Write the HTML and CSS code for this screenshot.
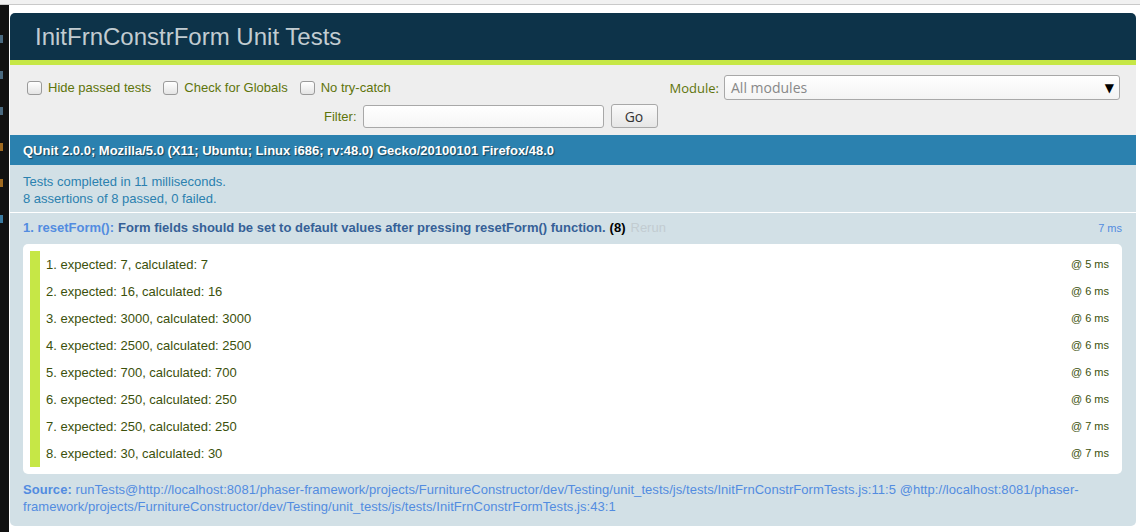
FILE: index.html
```html
<!DOCTYPE html>
<html>
<head>
<meta charset="utf-8">
<title>InitFrnConstrForm Unit Tests</title>
<link rel="stylesheet" href="styles.css">
</head>
<body>
<div class="topstrip"></div>
<div class="frame">
  <div class="sidebar">
    <span class="mark m1"></span><span class="mark m2"></span><span class="mark m3"></span><span class="mark m4"></span><span class="mark m5"></span><span class="mark m6"></span>
  </div>
  <div class="page">
    <h1 class="qheader">InitFrnConstrForm Unit Tests</h1>
    <div class="banner"></div>
    <div class="toolbar">
      <div class="row1">
        <div class="checks">
          <label class="chk"><span class="box"></span>Hide passed tests</label>
          <label class="chk"><span class="box"></span>Check for Globals</label>
          <label class="chk"><span class="box"></span>No try-catch</label>
        </div>
        <div class="module">
          <span class="module-label">Module:</span>
          <div class="select"><span>All modules</span><span class="arrow">▼</span></div>
        </div>
      </div>
      <div class="row2">
        <span class="filter-label">Filter:</span>
        <span class="input"></span>
        <span class="gobtn">Go</span>
      </div>
    </div>
    <div class="useragent">QUnit 2.0.0; Mozilla/5.0 (X11; Ubuntu; Linux i686; rv:48.0) Gecko/20100101 Firefox/48.0</div>
    <div class="testresult">Tests completed in 11 milliseconds.<br>8 assertions of 8 passed, 0 failed.</div>
    <div class="test">
      <div class="test-title">
        <strong class="module-name">1. resetForm():</strong>
        <strong class="test-name">Form fields should be set to default values after pressing resetForm() function.</strong>
        <strong class="counts">(8)</strong>
        <span class="rerun">Rerun</span>
        <span class="runtime">7 ms</span>
      </div>
      <ol class="assert-list">
        <li><span>1. expected: 7, calculated: 7</span><span class="rt">@ 5 ms</span></li>
        <li><span>2. expected: 16, calculated: 16</span><span class="rt">@ 6 ms</span></li>
        <li><span>3. expected: 3000, calculated: 3000</span><span class="rt">@ 6 ms</span></li>
        <li><span>4. expected: 2500, calculated: 2500</span><span class="rt">@ 6 ms</span></li>
        <li><span>5. expected: 700, calculated: 700</span><span class="rt">@ 6 ms</span></li>
        <li><span>6. expected: 250, calculated: 250</span><span class="rt">@ 6 ms</span></li>
        <li><span>7. expected: 250, calculated: 250</span><span class="rt">@ 7 ms</span></li>
        <li><span>8. expected: 30, calculated: 30</span><span class="rt">@ 7 ms</span></li>
      </ol>
      <p class="source"><strong class="source-label">Source:</strong> runTests@http://localhost:8081/phaser-framework/projects/FurnitureConstructor/dev/Testing/unit_tests/js/tests/InitFrnConstrFormTests.js:11:5 @http://localhost:8081/phaser-framework/projects/FurnitureConstructor/dev/Testing/unit_tests/js/tests/InitFrnConstrFormTests.js:43:1</p>
    </div>
  </div>
</div>
</body>
</html>
```

FILE: styles.css
```css
html, body {
  margin: 0;
  padding: 0;
  background: #fff;
  font-family: "Liberation Sans", Arial, sans-serif;
  font-size: 13px;
  overflow: hidden;
}
.topstrip {
  height: 4px;
  background: #f1f1f1;
  border-bottom: 1px solid #c9c9c9;
}
.frame {
  display: flex;
  height: 527px;
}
.sidebar {
  width: 9px;
  background: #111;
  display: flex;
  flex-direction: column;
  padding-top: 30px;
  gap: 28px;
}
.mark {
  display: block;
  width: 3px;
  height: 8px;
  background: #4a6a80;
}
.m4, .m5 { background: #a06a20; }
.m6 { background: #3a7aa0; }
.page {
  margin-left: 1px;
  width: 1126px;
  padding-top: 8px;
}
.qheader {
  margin: 0;
  padding: 12px 0 11px 25px;
  background: #0d3349;
  color: #c2ccd1;
  font-size: 24px;
  line-height: 24px;
  font-weight: 400;
  border-radius: 5px 5px 0 0;
}
.banner {
  height: 5px;
  background: #c6e746;
}
.toolbar {
  background: #eee;
  color: #5e740b;
  padding: 10px 16px 7px 17px;
  height: 53px;
}
.row1 {
  display: flex;
  justify-content: space-between;
  align-items: center;
}
.checks {
  display: flex;
  gap: 12px;
  align-items: center;
}
.chk {
  display: flex;
  align-items: center;
  gap: 6px;
  line-height: 15px;
}
.box {
  display: inline-block;
  width: 13px;
  height: 12px;
  border: 1px solid #9a9a9a;
  border-radius: 3px;
  background: linear-gradient(#fff, #e4e4e4);
}
.module {
  display: flex;
  align-items: center;
  gap: 5px;
}
.module-label {
  font-family: "Open Sans", sans-serif;
  font-size: 13px;
}
.select {
  width: 383px;
  height: 23px;
  border: 1px solid #a8a8a8;
  border-radius: 3px;
  background: linear-gradient(#fff, #f3f3f3);
  display: flex;
  align-items: center;
  justify-content: space-between;
  padding: 0 5px 0 6px;
  font-family: "Open Sans", sans-serif;
  font-size: 14px;
  color: #888;
}
.arrow {
  color: #000;
  font-size: 12px;
  font-family: "DejaVu Sans", sans-serif;
}
.row2 {
  display: flex;
  align-items: center;
  margin-left: 297px;
  margin-top: 4px;
  gap: 6px;
}
.input {
  display: inline-block;
  width: 239px;
  height: 21px;
  border: 1px solid #a8a8a8;
  border-radius: 3px;
  background: linear-gradient(#fff, #f5f5f5);
}
.gobtn {
  display: inline-flex;
  align-items: center;
  justify-content: center;
  width: 45px;
  height: 22px;
  margin-left: 1px;
  border: 1px solid #a8a8a8;
  border-radius: 3px;
  background: linear-gradient(#fafafa, #e6e6e6);
  color: #333;
  font-family: "Open Sans", sans-serif;
  font-size: 14px;
}
.useragent {
  background: #2b81af;
  color: #fff;
  font-weight: bold;
  padding: 7px 13px 6px;
  line-height: 17px;
  text-shadow: rgba(0,0,0,0.5) 1px 1px 1px;
}
.testresult {
  background: #d2e0e6;
  color: #2b81af;
  padding: 8px 13px 5px;
  line-height: 17px;
  border-bottom: 1px solid #fff;
}
.test {
  background: #d2e0e6;
  color: #528ce0;
  padding: 6px 14px 7px 13px;
  border-radius: 0 0 5px 5px;
}
.test-title {
  line-height: 17px;
  display: flex;
  align-items: baseline;
  gap: 4px;
}
.module-name { color: #528ce0; }
.test-name { color: #366097; }
.counts { color: #000; }
.rerun { color: #c2ccd1; margin-left: 1px; }
.runtime {
  margin-left: auto;
  font-size: 11px;
  color: #528ce0;
}
.assert-list {
  list-style: none;
  margin: 7px 0 0;
  padding: 7px;
  background: #fff;
  border-radius: 5px;
}
.assert-list li {
  display: flex;
  justify-content: space-between;
  align-items: center;
  height: 15px;
  border-left: 10px solid #c6e746;
  padding: 6px;
  line-height: 15px;
  color: #3c510c;
}
.rt {
  font-size: 11px;
}
.source {
  margin: 7px 0 4px;
  line-height: 17px;
  color: #528ce0;
  letter-spacing: 0.06px;
}
```
